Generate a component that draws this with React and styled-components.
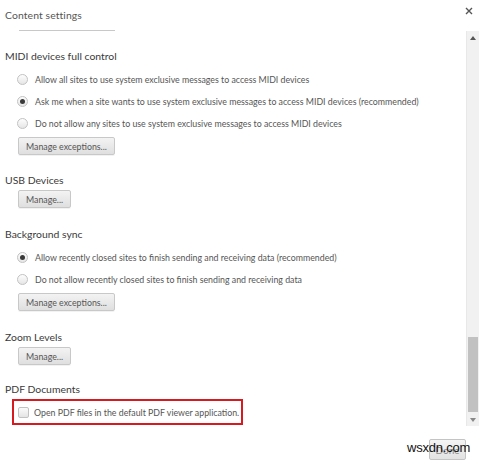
import React from "react";
import styled, { createGlobalStyle } from "styled-components";

const Global = createGlobalStyle`
  html, body { margin: 0; padding: 0; background: #fff; }
  body { font-family: "Lato", "Liberation Sans", sans-serif; }
`;

const Dialog = styled.div`
  position: relative;
  width: 480px;
  height: 464px;
  background: #fff;
  display: flex;
  flex-direction: column;
  overflow: hidden;
`;

const Header = styled.div`
  height: 31px;
  flex-shrink: 0;
  display: flex;
  align-items: flex-start;
  justify-content: space-between;
  position: relative;
`;

const Title = styled.div`
  margin: 9px 0 0 5px;
  font-size: 10.4px;
  color: #555;
  letter-spacing: 0.1px;
`;

const Close = styled.div`
  margin: 6px 6px 0 0;
  width: 10px;
  height: 10px;
  display: flex;
  align-items: center;
  justify-content: center;
`;

const HeaderRule = styled.div`
  position: absolute;
  left: 19px;
  bottom: 0;
  width: 96px;
  height: 1px;
  background: #c8c8c8;
`;

const Body = styled.div`
  display: flex;
  height: 395px;
  flex-shrink: 0;
`;

const Content = styled.div`
  flex: 1;
  min-width: 0;
  overflow: hidden;
  padding: 17px 0 0 5px;
`;

const Section = styled.section`
  margin-bottom: ${(p) => p.$gap}px;
`;

const SectionTitle = styled.div`
  font-size: 10.4px;
  color: #3a3a3a;
  height: 16px;
  line-height: 16px;
  margin-bottom: ${(p) => p.$after}px;
`;

const OptionList = styled.div`
  display: flex;
  flex-direction: column;
  gap: 6px;
  margin-left: 12px;
  margin-bottom: 6px;
`;

const Option = styled.label`
  display: flex;
  align-items: center;
  gap: 7px;
  height: 16px;
  font-size: 8.8px;
  color: #555;
  white-space: nowrap;
`;

const Radio = styled.span`
  width: 11px;
  height: 11px;
  box-sizing: border-box;
  border-radius: 50%;
  border: 1px solid #c2c2c2;
  background: linear-gradient(#fdfdfd, #e6e6e6);
  display: flex;
  align-items: center;
  justify-content: center;
  flex-shrink: 0;
  &::after {
    content: "";
    width: 5px;
    height: 5px;
    border-radius: 50%;
    background: ${(p) => (p.$checked ? "#3a3a3a" : "transparent")};
  }
`;

const Checkbox = styled.span`
  width: 11px;
  height: 11px;
  box-sizing: border-box;
  border: 1px solid #c2c2c2;
  border-radius: 2px;
  background: linear-gradient(#fbfbfb, #e4e4e4);
  flex-shrink: 0;
`;

const CheckOption = styled(Option)`
  gap: 5px;
`;

const Button = styled.button`
  margin-left: 13px;
  height: 18px;
  padding: 0 7px;
  border: 1px solid #c8c8c8;
  border-radius: 2px;
  background: linear-gradient(#f3f3f3, #dfdfdf);
  font-family: inherit;
  font-size: 8.8px;
  color: #555;
  box-shadow: 0 1px 0 rgba(0, 0, 0, 0.05);
  display: block;
`;

const Highlight = styled.div`
  margin: 2px 0 0 7px;
  width: 231px;
  height: 26px;
  box-sizing: border-box;
  border: 2px solid #d71920;
  display: flex;
  align-items: center;
  padding-left: 4px;
`;

const Scrollbar = styled.div`
  width: 12px;
  flex-shrink: 0;
  margin-right: 1px;
  background: #f1f1f1;
  border-left: 1px solid #e8e8e8;
  display: flex;
  flex-direction: column;
  align-items: center;
`;

const Arrow = styled.div`
  height: 13px;
  display: flex;
  align-items: center;
  justify-content: center;
`;

const Track = styled.div`
  flex: 1;
  width: 100%;
  display: flex;
  flex-direction: column;
  justify-content: flex-end;
`;

const Thumb = styled.div`
  height: 75px;
  margin: 0 1px 1px;
  background: #c1c1c1;
`;

const Footer = styled.div`
  flex: 1;
  display: flex;
  justify-content: flex-end;
  align-items: flex-start;
  padding: 13px 14px 0 0;
`;

const DoneButton = styled.button`
  width: 37px;
  height: 21px;
  border: 1px solid #c4c4c4;
  border-radius: 2px;
  background: linear-gradient(#f4f4f4, #e2e2e2);
  font-family: inherit;
  font-size: 10px;
  color: #888;
  padding: 0;
`;

const Watermark = styled.div`
  position: absolute;
  left: 407px;
  top: 440px;
  font-family: "Liberation Sans", Arial, sans-serif;
  font-size: 13px;
  color: #111;
  letter-spacing: -0.2px;
`;

const radioOpts = (arr) =>
  arr.map(([label, checked]) => (
    <Option key={label}>
      <Radio $checked={checked} />
      {label}
    </Option>
  ));

export default function App() {
  return (
    <>
      <Global />
      <Dialog>
        <Header>
          <Title>Content settings</Title>
          <Close>
            <svg width="8" height="8" viewBox="0 0 8 8">
              <path d="M1 1L7 7M7 1L1 7" stroke="#555" strokeWidth="1.4" />
            </svg>
          </Close>
          <HeaderRule />
        </Header>
        <Body>
          <Content>
            <Section $gap={17}>
              <SectionTitle $after={7}>MIDI devices full control</SectionTitle>
              <OptionList>
                {radioOpts([
                  ["Allow all sites to use system exclusive messages to access MIDI devices", false],
                  ["Ask me when a site wants to use system exclusive messages to access MIDI devices (recommended)", true],
                  ["Do not allow any sites to use system exclusive messages to access MIDI devices", false],
                ])}
              </OptionList>
              <Button>Manage exceptions...</Button>
            </Section>
            <Section $gap={18}>
              <SectionTitle $after={2}>USB Devices</SectionTitle>
              <Button>Manage...</Button>
            </Section>
            <Section $gap={18}>
              <SectionTitle $after={7}>Background sync</SectionTitle>
              <OptionList>
                {radioOpts([
                  ["Allow recently closed sites to finish sending and receiving data (recommended)", true],
                  ["Do not allow recently closed sites to finish sending and receiving data", false],
                ])}
              </OptionList>
              <Button>Manage exceptions...</Button>
            </Section>
            <Section $gap={16}>
              <SectionTitle $after={2}>Zoom Levels</SectionTitle>
              <Button>Manage...</Button>
            </Section>
            <Section $gap={0}>
              <SectionTitle $after={0}>PDF Documents</SectionTitle>
              <Highlight>
                <CheckOption>
                  <Checkbox />
                  Open PDF files in the default PDF viewer application.
                </CheckOption>
              </Highlight>
            </Section>
          </Content>
          <Scrollbar>
            <Arrow>
              <svg width="6" height="4" viewBox="0 0 6 4">
                <path d="M0 4L3 0L6 4Z" fill="#555" />
              </svg>
            </Arrow>
            <Track>
              <Thumb />
            </Track>
            <Arrow>
              <svg width="6" height="4" viewBox="0 0 6 4">
                <path d="M0 0L3 4L6 0Z" fill="#888" />
              </svg>
            </Arrow>
          </Scrollbar>
        </Body>
        <Footer>
          <DoneButton>Done</DoneButton>
        </Footer>
        <Watermark>wsxdn.com</Watermark>
      </Dialog>
    </>
  );
}
